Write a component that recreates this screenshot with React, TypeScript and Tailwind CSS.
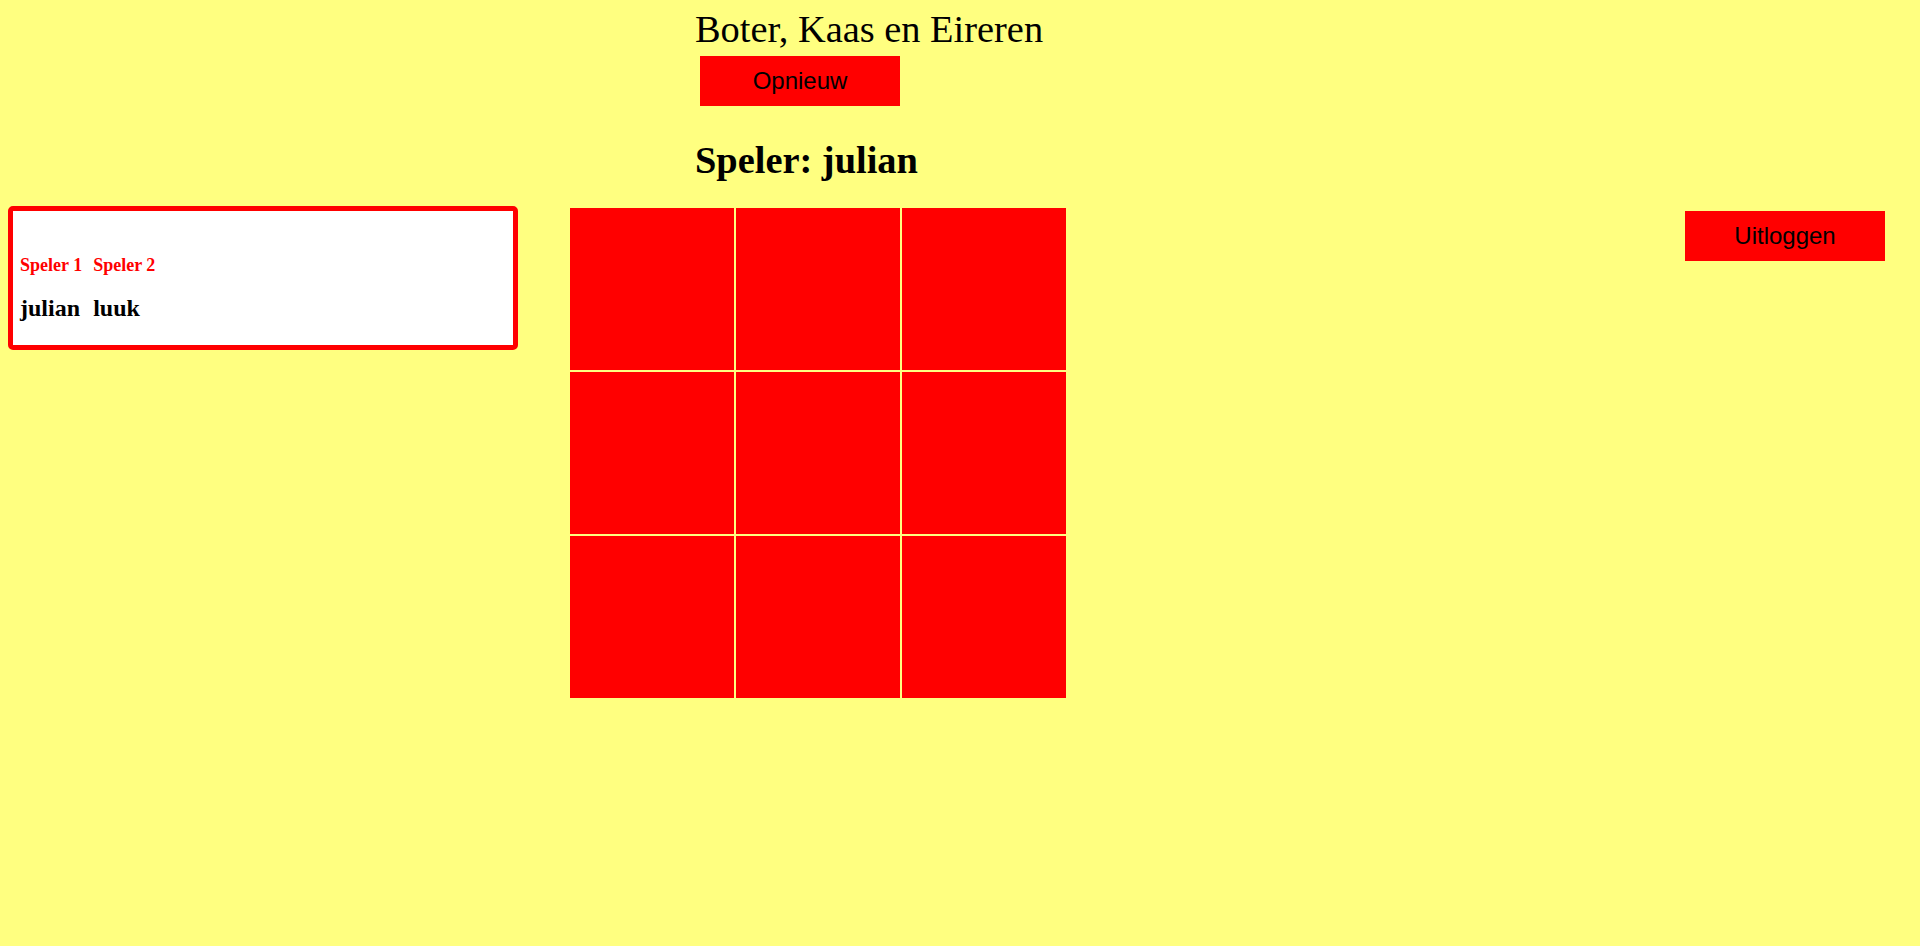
import React from 'react';

const cells = Array.from({ length: 9 }, (_, i) => i);

const PlayerCard: React.FC = () => (
  <div className="ml-[8px] w-[510px] h-[144px] border-[5px] border-[#ff0000] rounded-[5px] bg-white pl-[7px] pt-[43px]">
    <div className="grid grid-cols-[auto_auto_1fr] gap-x-[11px]">
      <span className="text-[18px] leading-[22px] font-bold text-[#ff0000]">Speler 1</span>
      <span className="text-[18px] leading-[22px] font-bold text-[#ff0000]">Speler 2</span>
      <span />
      <span className="mt-[18px] text-[24px] leading-[28px] font-bold text-black">julian</span>
      <span className="mt-[18px] text-[24px] leading-[28px] font-bold text-black">luuk</span>
      <span />
    </div>
  </div>
);

const Board: React.FC = () => (
  <div className="mt-[2px] grid grid-cols-[164px_164px_164px] grid-rows-[162px_162px_162px] gap-[2px]">
    {cells.map((c) => (
      <button key={c} className="bg-[#ff0000]" aria-label={`vak ${c + 1}`} />
    ))}
  </div>
);

export default function App() {
  return (
    <div className="min-h-screen bg-[#ffff80] font-['Liberation_Serif','Times_New_Roman',serif] text-black">
      <header className="pt-[7px] pl-[695px]">
        <h1 className="text-[38.4px] leading-[44px] font-normal">Boter, Kaas en Eireren</h1>
        <button className="mt-[5px] ml-[5px] w-[200px] h-[50px] bg-[#ff0000] text-[24px] text-black font-['Liberation_Sans',Arial,sans-serif]">
          Opnieuw
        </button>
        <h2 className="mt-[32px] text-[38.4px] leading-[44px] font-bold">Speler: julian</h2>
      </header>

      <div className="mt-[24px] flex items-start">
        <PlayerCard />
        <div className="ml-[52px]">
          <Board />
        </div>
        <div className="flex-1 flex justify-end pr-[35px]">
          <button className="mt-[5px] w-[200px] h-[50px] bg-[#ff0000] text-[24px] text-black font-['Liberation_Sans',Arial,sans-serif]">
            Uitloggen
          </button>
        </div>
      </div>
    </div>
  );
}
